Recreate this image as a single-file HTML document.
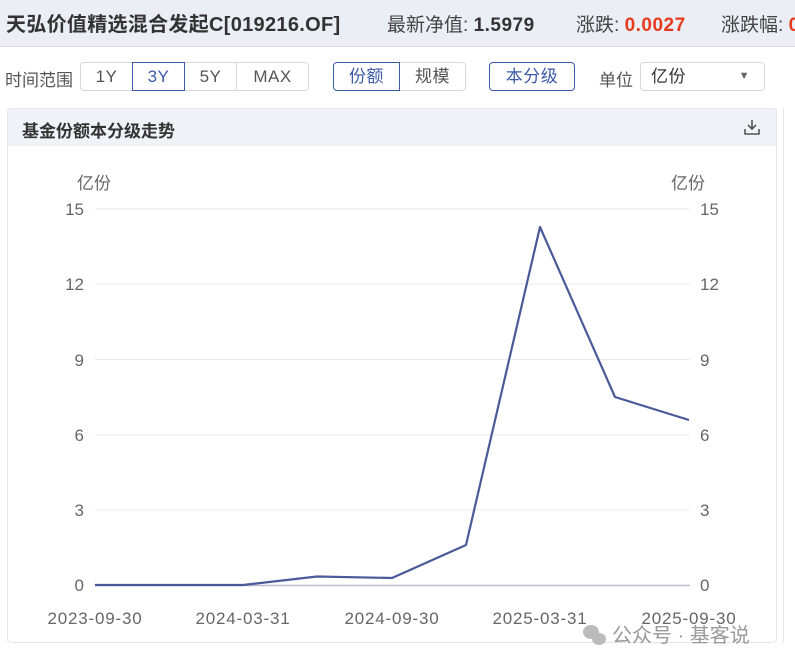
<!DOCTYPE html>
<html><head><meta charset="utf-8"><style>
body{margin:0;width:795px;height:668px;background:#fff;font-family:"Liberation Sans","Noto Sans CJK SC",sans-serif;position:relative;overflow:hidden}
.top{position:absolute;left:0;top:0;width:795px;height:46px;background:#eceef6;border-bottom:1px solid #d8dae6}
.t{position:absolute;white-space:nowrap}
.btn{position:absolute;top:62px;height:29px;border:1px solid #d6d8e0;box-sizing:border-box;font-size:17px;color:#555;line-height:27px;text-align:center;background:#fff;letter-spacing:0.5px}
.sel{border-color:#3c5aa8;color:#3c5aa8}
</style></head><body>
<div class="top"></div>
<div class="t" style="left:6px;top:8px;font-size:20px;font-weight:bold;color:#333;letter-spacing:0.3px">天弘价值精选混合发起C[019216.OF]</div>
<div class="t" style="left:387px;top:10px;font-size:19px;color:#444">最新净值: <b style="color:#333;letter-spacing:0.5px">1.5979</b></div>
<div class="t" style="left:576px;top:10px;font-size:19px;color:#444">涨跌: <b style="color:#e53b1e;letter-spacing:0.5px">0.0027</b></div>
<div class="t" style="left:721px;top:10px;font-size:19px;color:#444">涨跌幅: <b style="color:#e53b1e">0</b></div>

<div class="t" style="left:5px;top:66px;font-size:17px;color:#555">时间范围</div>
<div class="btn" style="left:80px;width:53px;border-radius:4px 0 0 4px">1Y</div>
<div class="btn sel" style="left:132px;width:53px;z-index:2">3Y</div>
<div class="btn" style="left:184px;width:53px">5Y</div>
<div class="btn" style="left:236px;width:73px;border-radius:0 4px 4px 0">MAX</div>
<div class="btn sel" style="left:333px;width:67px;border-radius:4px 0 0 4px;z-index:2">份额</div>
<div class="btn" style="left:399px;width:67px;border-radius:0 4px 4px 0">规模</div>
<div class="btn sel" style="left:489px;width:86px;border-radius:4px">本分级</div>
<div class="t" style="left:599px;top:66px;font-size:17px;color:#555">单位</div>
<div class="btn" style="left:640px;width:125px;border-radius:4px;text-align:left;padding-left:10px;color:#333">亿份<span style="position:absolute;right:14px;top:0;font-size:11px;color:#666">▼</span></div>

<div style="position:absolute;left:7px;top:108px;width:770px;height:535px;border:1px solid #e4e6ee;border-radius:4px;box-sizing:border-box"></div>
<div style="position:absolute;left:8px;top:109px;width:768px;height:37px;background:#f1f2f7"></div>
<div style="position:absolute;left:783px;top:108px;width:1px;height:535px;background:#e4e6ee"></div>
<div class="t" style="left:22px;top:117px;font-size:17px;font-weight:bold;color:#333">基金份额本分级走势</div>
<svg style="position:absolute;left:743px;top:118px" width="18" height="18" viewBox="0 0 18 18" fill="none" stroke="#555" stroke-width="1.6"><path d="M9 2v9M5 7l4 4 4-4M2 11v5h14v-5"/></svg>

<svg style="position:absolute;left:0;top:0" width="795" height="668" font-family="Liberation Sans, sans-serif" font-size="17" fill="#666">
<g stroke="#e8eaf2" stroke-width="1">
<line x1="95" y1="209" x2="690" y2="209"/><line x1="95" y1="284" x2="690" y2="284"/><line x1="95" y1="359.5" x2="690" y2="359.5"/><line x1="95" y1="435" x2="690" y2="435"/><line x1="95" y1="510" x2="690" y2="510"/>
</g>
<line x1="95" y1="585.5" x2="690" y2="585.5" stroke="#b8bccb" stroke-width="1.5"/>
<text x="77" y="189" font-family="Liberation Sans, Noto Sans CJK SC, sans-serif">亿份</text>
<text x="671" y="189" font-family="Liberation Sans, Noto Sans CJK SC, sans-serif">亿份</text>
<g text-anchor="end"><text x="84" y="215">15</text><text x="84" y="290">12</text><text x="84" y="366">9</text><text x="84" y="441">6</text><text x="84" y="516">3</text><text x="84" y="591">0</text></g>
<g><text x="700" y="215">15</text><text x="700" y="290">12</text><text x="700" y="366">9</text><text x="700" y="441">6</text><text x="700" y="516">3</text><text x="700" y="591">0</text></g>
<g text-anchor="middle" letter-spacing="0.8"><text x="95" y="624">2023-09-30</text><text x="243" y="624">2024-03-31</text><text x="392" y="624">2024-09-30</text><text x="540" y="624">2025-03-31</text><text x="689" y="624">2025-09-30</text></g>
<polyline fill="none" stroke="#4a5a98" stroke-width="2.2" stroke-linejoin="round" points="95,585 243,585 317,576.5 392,578 466,545 540,227 615,397 689,420"/>
<g fill="#bbb"><ellipse cx="591" cy="632" rx="8" ry="7"/><ellipse cx="599" cy="639" rx="7" ry="6"/></g>
<text x="612" y="642" font-size="20" fill="#999" font-family="Liberation Sans, Noto Sans CJK SC, sans-serif">公众号 · 基客说</text>
</svg>
</body></html>
